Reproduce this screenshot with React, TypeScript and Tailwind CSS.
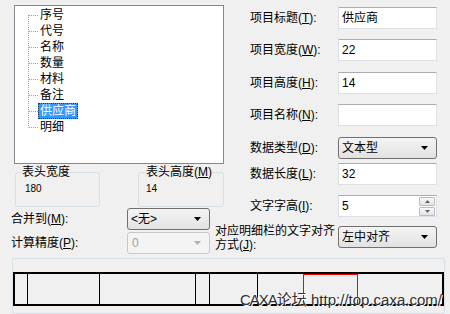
import React from "react";

const items = ["序号", "代号", "名称", "数量", "材料", "备注", "供应商", "明细"];

function Conn({ first, last }: { first: boolean; last: boolean }) {
  return (
    <svg width="10" height="16" className="shrink-0 block">
      <line x1="0.5" y1={first ? 8 : 0} x2="0.5" y2={last ? 8.5 : 16} stroke="#a0a0a0" strokeDasharray="1 1" />
      <line x1="1" y1="8.5" x2="10" y2="8.5" stroke="#a0a0a0" strokeDasharray="1 1" />
    </svg>
  );
}

function Arrow({ color = "#000" }: { color?: string }) {
  return (
    <svg width="7" height="4" className="block">
      <path d="M0 0h7L3.5 4z" fill={color} />
    </svg>
  );
}

function Combo({ value, w = "w-[99px]", disabled = false }: { value: string; w?: string; disabled?: boolean }) {
  return (
    <div
      className={
        disabled
          ? `${w} h-[22px] shrink-0 border border-[#c5c9cc] rounded-[3px] bg-[#f4f4f4] flex items-center justify-between pl-[4px] pr-[8px] text-[#a0a0a0]`
          : `${w} h-[22px] shrink-0 border border-[#707070] rounded-[3px] bg-gradient-to-b from-[#f4f4f4] to-[#e2e2e2] flex items-center justify-between pl-[3px] pr-[8px]`
      }
    >
      <span className="leading-[14px]">{value}</span>
      <Arrow color={disabled ? "#b0b0b0" : "#000"} />
    </div>
  );
}

function Input({ value, spin = false }: { value: string; spin?: boolean }) {
  return (
    <div className="w-[99px] h-[22px] shrink-0 border border-[#dbdfe6] border-t-[#abadb3] bg-white flex items-center justify-between pl-[3px] pr-[1px]">
      <span className="leading-[14px]">{value}</span>
      {spin && (
        <div className="flex flex-col gap-[1px] w-[16px]">
          <div className="h-[9px] border border-[#b8bcc2] rounded-[1px] bg-gradient-to-b from-[#f8f8f8] to-[#e4e4e4] flex items-center justify-center">
            <svg width="5" height="3" className="block"><path d="M0 3h5L2.5 0z" fill="#5a6470" /></svg>
          </div>
          <div className="h-[9px] border border-[#b8bcc2] rounded-[1px] bg-gradient-to-b from-[#f8f8f8] to-[#e4e4e4] flex items-center justify-center">
            <svg width="5" height="3" className="block"><path d="M0 0h5L2.5 3z" fill="#5a6470" /></svg>
          </div>
        </div>
      )}
    </div>
  );
}

function Label({ text, k }: { text: string; k: string }) {
  return (
    <span className="w-[88px] shrink-0 leading-[14px] whitespace-nowrap">
      {text}(<span className="underline">{k}</span>):
    </span>
  );
}

function Row({ children, mt }: { children: React.ReactNode; mt: string }) {
  return <div className={`flex items-center h-[22px] pl-[20px] ${mt}`}>{children}</div>;
}

export default function App() {
  return (
    <div className="w-[450px] h-[314px] bg-[#f0f0f0] overflow-hidden text-[12px] text-black font-['Liberation_Sans','Noto_Sans_CJK_SC',sans-serif]">
      <div className="flex h-[254px]">
        {/* left column */}
        <div className="w-[230px] shrink-0 flex flex-col pt-[5px]">
          <div className="ml-[14px] w-[210px] h-[159px] border border-[#828790] bg-white pt-[1px] pl-[13px]">
            {items.map((t, i) => (
              <div key={t} className="flex h-[16px] items-center">
                <Conn first={i === 0} last={i === items.length - 1} />
                {t === "供应商" ? (
                  <span className="h-[16px] px-[2px] bg-[#3399ff] text-white leading-[16px] outline outline-1 outline-dotted outline-[#1a3c6e] -outline-offset-1">
                    {t}
                  </span>
                ) : (
                  <span className="px-[2px] leading-[16px]">{t}</span>
                )}
              </div>
            ))}
          </div>
          <div className="flex mt-[2px]">
            <fieldset className="ml-[15px] w-[85px] h-[41px] border border-[#d5dfe5] rounded-[3px]">
              <legend className="ml-[6px] leading-[12px] px-0">表头宽度</legend>
              <div className="pl-[9px] mt-[5px] leading-[12px] text-[10px]">180</div>
            </fieldset>
            <fieldset className="ml-[38px] w-[86px] h-[41px] border border-[#d5dfe5] rounded-[3px]">
              <legend className="ml-[7px] leading-[12px] px-0">
                表头高度(<span className="underline">M</span>)
              </legend>
              <div className="pl-[7px] mt-[5px] leading-[12px] text-[10px]">14</div>
            </fieldset>
          </div>
          <div className="flex items-center h-[22px] mt-[1px] pl-[11px]">
            <span className="w-[116px] shrink-0 leading-[14px]">
              合并到(<span className="underline">M</span>):
            </span>
            <Combo value="<无>" w="w-[83px]" />
          </div>
          <div className="flex items-center h-[22px] mt-[2px] pl-[11px]">
            <span className="w-[116px] shrink-0 leading-[14px]">
              计算精度(<span className="underline">P</span>):
            </span>
            <Combo value="0" w="w-[83px]" disabled />
          </div>
        </div>

        {/* right column */}
        <div className="flex-1 flex flex-col pt-[7px]">
          <Row mt="mt-0">
            <Label text="项目标题" k="T" />
            <Input value="供应商" />
          </Row>
          <Row mt="mt-[10px]">
            <Label text="项目宽度" k="W" />
            <Input value="22" />
          </Row>
          <Row mt="mt-[11px]">
            <Label text="项目高度" k="H" />
            <Input value="14" />
          </Row>
          <Row mt="mt-[10px]">
            <Label text="项目名称" k="N" />
            <Input value="" />
          </Row>
          <Row mt="mt-[11px]">
            <Label text="数据类型" k="D" />
            <Combo value="文本型" />
          </Row>
          <Row mt="mt-[4px]">
            <Label text="数据长度" k="L" />
            <Input value="32" />
          </Row>
          <Row mt="mt-[10px]">
            <Label text="文字字高" k="I" />
            <Input value="5" spin />
          </Row>
          <div className="flex items-start mt-[7px] ml-[-15px]">
            <span className="w-[123px] shrink-0 leading-[14px]">
              对应明细栏的文字对齐方式(<span className="underline">J</span>):
            </span>
            <div className="mt-[2px]">
              <Combo value="左中对齐" />
            </div>
          </div>
        </div>
      </div>

      {/* preview */}
      <div className="relative mt-[4px] ml-[12px] w-[433px] h-[56px] border border-[#d5dfe5] rounded-[2px] pt-[13px]">
        <div className="flex h-[34px] border-2 border-black">
          <div className="w-[12px] shrink-0" />
          <div className="w-[72px] shrink-0 border-l border-black" />
          <div className="w-[96px] shrink-0 border-l border-black" />
          <div className="w-[14px] shrink-0 border-l border-black" />
          <div className="w-[48px] shrink-0 border-l border-black" />
          <div className="w-[46px] shrink-0 border-l border-black" />
          <div className="w-[55px] shrink-0 border border-b-0 border-[#ff0000]" />
          <div className="flex-1" />
        </div>
        <div className="absolute left-[227px] top-[33px] text-[15px] leading-[16px] text-[#303030] whitespace-nowrap [text-shadow:1px_1px_0_#fff]">
          <span className="tracking-[-1px]">CAXA</span>论坛 http://top.caxa.com/
        </div>
      </div>
    </div>
  );
}
